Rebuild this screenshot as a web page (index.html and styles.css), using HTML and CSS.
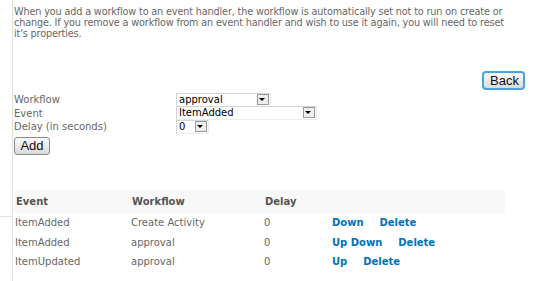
FILE: index.html
```html
<!DOCTYPE html>
<html lang="en">
<head>
    <meta charset="UTF-8">
    <title>Workflow Event Handlers</title>
    <link rel="stylesheet" href="styles.css">
</head>
<body>
    <div class="page">
        <div class="side">
            <div class="side-top"></div>
            <div class="side-bottom"></div>
        </div>
        <div class="main">
            <p class="intro">When you add a workflow to an event handler, the workflow is automatically set not to run on create or<br>change. If you remove a workflow from an event handler and wish to use it again, you will need to reset<br>it's properties.</p>

            <div class="toolbar">
                <button class="btn btn-back">Back</button>
            </div>

            <form class="add-form">
                <div class="form-row">
                    <label for="workflow">Workflow</label>
                    <div class="sel-wrap sel-workflow">
                        <select id="workflow" class="sel">
                            <option>approval</option>
                            <option>Create Activity</option>
                        </select>
                    </div>
                </div>
                <div class="form-row">
                    <label for="event">Event</label>
                    <div class="sel-wrap sel-event">
                        <select id="event" class="sel">
                            <option>ItemAdded</option>
                            <option>ItemUpdated</option>
                        </select>
                    </div>
                </div>
                <div class="form-row">
                    <label for="delay">Delay (in seconds)</label>
                    <div class="sel-wrap sel-delay">
                        <select id="delay" class="sel">
                            <option>0</option>
                        </select>
                    </div>
                </div>
                <button type="button" class="btn btn-add">Add</button>
            </form>

            <table class="handlers">
                <thead>
                    <tr>
                        <th class="col-event">Event</th>
                        <th class="col-workflow">Workflow</th>
                        <th class="col-delay">Delay</th>
                        <th></th>
                    </tr>
                </thead>
                <tbody>
                    <tr>
                        <td>ItemAdded</td>
                        <td>Create Activity</td>
                        <td>0</td>
                        <td class="actions"><a href="#">Down</a><a href="#">Delete</a></td>
                    </tr>
                    <tr>
                        <td>ItemAdded</td>
                        <td>approval</td>
                        <td>0</td>
                        <td class="actions"><a href="#">Up Down</a><a href="#">Delete</a></td>
                    </tr>
                    <tr>
                        <td>ItemUpdated</td>
                        <td>approval</td>
                        <td>0</td>
                        <td class="actions"><a href="#">Up</a><a href="#">Delete</a></td>
                    </tr>
                </tbody>
            </table>
        </div>
    </div>
</body>
</html>
```

FILE: styles.css
```css
body {
    margin: 0;
    padding: 0;
    background-color: #ffffff;
    font-family: "DejaVu Sans", Verdana, sans-serif;
    font-size: 10px;
    color: #676767;
}
.page {
    display: flex;
    min-height: 281px;
}
.side {
    width: 12px;
    flex-shrink: 0;
    border-right: 1px solid #e2e2e2;
    display: flex;
    flex-direction: column;
}
.side-top {
    height: 216px;
    border-bottom: 1px solid #e2e2e2;
}
.main {
    flex: 1;
    padding: 0 20px 0 1px;
}
.intro {
    margin: 6px -20px 0 0;
    font-size: 9.7px;
    line-height: 11px;
    letter-spacing: -0.15px;
    white-space: nowrap;
}
.toolbar {
    display: flex;
    justify-content: flex-end;
    margin-top: 32px;
}
.btn {
    font-family: "Liberation Sans", Arial, sans-serif;
    font-size: 13px;
    color: #111;
    background: linear-gradient(#fbfbfb, #dadada);
    border: 1px solid #8a8a8a;
    border-radius: 3px;
    padding: 0 6px;
    height: 18px;
    line-height: 16px;
}
.btn-back {
    border: 2px solid #4aa3df;
    border-radius: 4px;
    height: 19px;
    line-height: 15px;
    width: 43px;
}
.add-form {
    margin-top: 3px;
}
.form-row {
    display: flex;
    align-items: center;
    height: 13.5px;
}
.form-row label {
    width: 162px;
}
.sel-wrap {
    position: relative;
    height: 14px;
    box-sizing: border-box;
    border: 1px solid #d4d4d4;
    border-right-color: #ececec;
    border-bottom-color: #ececec;
    background: #fff;
}
.sel-wrap::after {
    content: "";
    position: absolute;
    top: 0;
    right: 1px;
    width: 12px;
    height: 11px;
    box-sizing: border-box;
    border: 1px solid #9a9a9a;
    background: #ededed;
    pointer-events: none;
}
.sel-wrap::before {
    content: "";
    position: absolute;
    top: 4px;
    right: 5px;
    border-left: 3px solid transparent;
    border-right: 3px solid transparent;
    border-top: 3px solid #000;
    z-index: 1;
    pointer-events: none;
}
.sel {
    appearance: none;
    -webkit-appearance: none;
    font-family: "DejaVu Sans", Verdana, sans-serif;
    font-size: 10px;
    color: #000;
    width: 100%;
    height: 12px;
    line-height: 12px;
    padding: 0 0 0 2px;
    margin: 0;
    border: none;
    background: transparent;
    display: block;
}
.sel-workflow {
    width: 95px;
}
.sel-event {
    width: 141px;
}
.sel-delay {
    width: 33px;
}
.btn-add {
    margin-top: 3px;
    width: 36px;
    padding: 0;
}
.handlers {
    margin-top: 35px;
    width: 491px;
    border-collapse: collapse;
}
.handlers th {
    background-color: #f8f8f8;
    text-align: left;
    font-weight: bold;
    color: #555;
    height: 23px;
    padding: 0 0 0 2px;
}
.handlers td {
    height: 18.5px;
    padding: 1px 0 0 1px;
}
.col-event {
    width: 114px;
}
.col-workflow {
    width: 131px;
}
.col-delay {
    width: 66px;
}
.actions a {
    color: #0072bc;
    font-weight: bold;
    text-decoration: none;
    margin-right: 16px;
}
```
